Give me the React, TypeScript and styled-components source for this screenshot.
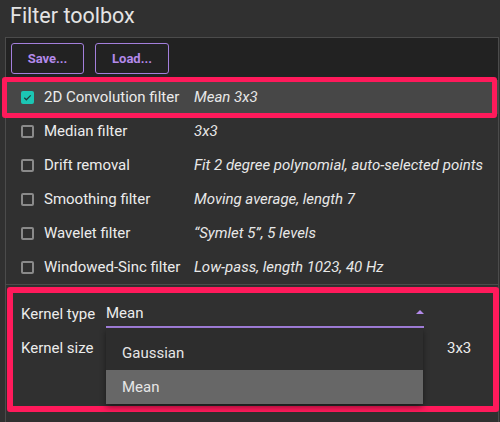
import React from "react";
import styled, { createGlobalStyle } from "styled-components";

const Global = createGlobalStyle`
  html, body { margin: 0; padding: 0; background: #303030; }
  body { font-family: Roboto, "Noto Sans", sans-serif; color: #e6e6e6; overflow: hidden; }
`;

const Page = styled.div`
  width: 500px;
  height: 422px;
  overflow: hidden;
  background: #303030;
`;

const Title = styled.h1`
  margin: 0;
  height: 37px;
  box-sizing: border-box;
  padding: 2px 0 0 10px;
  font-size: 21.5px;
  font-weight: 400;
  line-height: 28px;
  color: #e4e4e4;
`;

const Panel = styled.div`
  margin: 0 1px 0 5px;
  border: 1px solid #4b4b4b;
  border-bottom: none;
  height: 400px;
`;

const ButtonBar = styled.div`
  display: flex;
  gap: 11px;
  padding: 5px;
  background: #222222;
  height: 42px;
  box-sizing: border-box;
`;

const OutlineButton = styled.button<{ $w: number }>`
  height: 31px;
  width: ${(p) => p.$w}px;
  box-sizing: border-box;
  border: 1px solid #a37fdc;
  border-radius: 3px;
  background: transparent;
  color: #b389ea;
  font-family: Roboto, sans-serif;
  font-size: 13px;
  font-weight: 700;
  padding: 0;
`;

const List = styled.div`
  display: flex;
  flex-direction: column;
`;

const Row = styled.div<{ $selected?: boolean }>`
  position: relative;
  height: 34px;
  display: grid;
  grid-template-columns: 13px 140px 1fr;
  column-gap: 10px;
  align-items: center;
  padding-left: 15px;
  background: ${(p) => (p.$selected ? "#474747" : "transparent")};
  font-size: 15px;
  &::after {
    content: ${(p) => (p.$selected ? '""' : "none")};
    position: absolute;
    top: -3px;
    left: -4px;
    width: 495px;
    height: 41px;
    box-sizing: border-box;
    border: 5px solid #ff1a5b;
    border-radius: 3px;
    pointer-events: none;
  }
`;

const Box = styled.span<{ $checked?: boolean }>`
  width: 13px;
  height: 13px;
  box-sizing: border-box;
  border-radius: 2px;
  border: ${(p) => (p.$checked ? "none" : "2px solid #8a8a8a")};
  background: ${(p) => (p.$checked ? "#1cc6b4" : "transparent")};
  display: flex;
  align-items: center;
  justify-content: center;
`;

const Label = styled.span`
  color: #ececec;
  white-space: nowrap;
`;

const Desc = styled.span`
  font-style: italic;
  color: #e8e8e8;
  white-space: nowrap;
`;

const Separator = styled.div`
  border-top: 1px solid #4b4b4b;
`;

const Settings = styled.div`
  position: relative;
  padding: 15px 0 0 15px;
  display: grid;
  grid-template-columns: 85px 318px 1fr;
  grid-auto-rows: 28px;
  row-gap: 6px;
  align-items: center;
  font-size: 15px;
  &::after {
    content: "";
    position: absolute;
    top: 2px;
    left: 1px;
    width: 492px;
    height: 125px;
    box-sizing: border-box;
    border: 6px solid #ff1a5b;
    border-radius: 3px;
    pointer-events: none;
  }
`;

const FieldLabel = styled.span`
  color: #ececec;
  white-space: nowrap;
`;

const SelectBox = styled.div`
  position: relative;
  height: 28px;
  box-sizing: border-box;
  border-bottom: 2px solid #a37fdc;
  display: flex;
  align-items: center;
  justify-content: space-between;
  color: #ececec;
`;

const Arrow = styled.span`
  width: 0;
  height: 0;
  border-left: 4px solid transparent;
  border-right: 4px solid transparent;
  border-bottom: 4px solid #b38aea;
  margin-bottom: 2px;
`;

const Menu = styled.div`
  position: absolute;
  top: 28px;
  left: 0;
  width: 317px;
  background: #2d2d2d;
  padding-top: 8px;
  box-shadow: 0 3px 6px rgba(0, 0, 0, 0.45);
  z-index: 2;
`;

const MenuItem = styled.div<{ $active?: boolean }>`
  height: 34px;
  display: flex;
  align-items: center;
  padding-left: 16px;
  color: #e6e6e6;
  background: ${(p) => (p.$active ? "#676767" : "transparent")};
`;

const Value = styled.span`
  padding-left: 23px;
  color: #ececec;
`;

const filters = [
  { name: "2D Convolution filter", desc: "Mean 3x3", checked: true },
  { name: "Median filter", desc: "3x3" },
  { name: "Drift removal", desc: "Fit 2 degree polynomial, auto-selected points" },
  { name: "Smoothing filter", desc: "Moving average, length 7" },
  { name: "Wavelet filter", desc: "\u201cSymlet 5\u201d, 5 levels" },
  { name: "Windowed-Sinc filter", desc: "Low-pass, length 1023, 40 Hz" },
];

export default function App() {
  return (
    <Page>
      <Global />
      <Title>Filter toolbox</Title>
      <Panel>
        <ButtonBar>
          <OutlineButton $w={73}>Save...</OutlineButton>
          <OutlineButton $w={74}>Load...</OutlineButton>
        </ButtonBar>
        <List>
          {filters.map((f) => (
            <Row key={f.name} $selected={!!f.checked}>
              <Box $checked={!!f.checked}>
                {f.checked && (
                  <svg width="11" height="11" viewBox="0 0 24 24">
                    <path d="M5 12.5l4.5 4.5L19 7.5" fill="none" stroke="#1e3b3a" strokeWidth="2.6" />
                  </svg>
                )}
              </Box>
              <Label>{f.name}</Label>
              <Desc>{f.desc}</Desc>
            </Row>
          ))}
        </List>
        <Separator />
        <Settings>
          <FieldLabel>Kernel type</FieldLabel>
          <SelectBox>
            <span>Mean</span>
            <Arrow />
            <Menu>
              <MenuItem>Gaussian</MenuItem>
              <MenuItem $active>Mean</MenuItem>
            </Menu>
          </SelectBox>
          <span />
          <FieldLabel>Kernel size</FieldLabel>
          <span />
          <Value>3x3</Value>
        </Settings>
      </Panel>
    </Page>
  );
}
